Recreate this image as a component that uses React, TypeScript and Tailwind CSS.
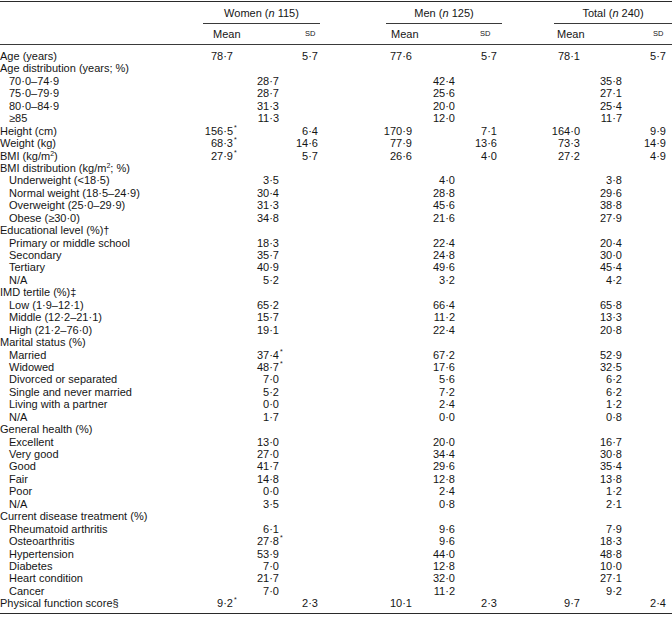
type Val = string;

type Row =
  | { kind: "head"; label: React.ReactNode }
  | { kind: "pct"; label: React.ReactNode; v: [Val, Val, Val] }
  | { kind: "ms"; label: React.ReactNode; v: [Val, Val, Val, Val, Val, Val] };

const sq = <span className="relative top-[-4px] text-[7px] leading-none">2</span>;

const ROWS: Row[] = [
  { kind: "ms", label: "Age (years)", v: ["78·7", "5·7", "77·6", "5·7", "78·1", "5·7"] },
  { kind: "head", label: "Age distribution (years; %)" },
  { kind: "pct", label: "70·0–74·9", v: ["28·7", "42·4", "35·8"] },
  { kind: "pct", label: "75·0–79·9", v: ["28·7", "25·6", "27·1"] },
  { kind: "pct", label: "80·0–84·9", v: ["31·3", "20·0", "25·4"] },
  { kind: "pct", label: "≥85", v: ["11·3", "12·0", "11·7"] },
  { kind: "ms", label: "Height (cm)", v: ["156·5*", "6·4", "170·9", "7·1", "164·0", "9·9"] },
  { kind: "ms", label: "Weight (kg)", v: ["68·3*", "14·6", "77·9", "13·6", "73·3", "14·9"] },
  { kind: "ms", label: <>BMI (kg/m{sq})</>, v: ["27·9*", "5·7", "26·6", "4·0", "27·2", "4·9"] },
  { kind: "head", label: <>BMI distribution (kg/m{sq}; %)</> },
  { kind: "pct", label: "Underweight (<18·5)", v: ["3·5", "4·0", "3·8"] },
  { kind: "pct", label: "Normal weight (18·5–24·9)", v: ["30·4", "28·8", "29·6"] },
  { kind: "pct", label: "Overweight (25·0–29·9)", v: ["31·3", "45·6", "38·8"] },
  { kind: "pct", label: "Obese (≥30·0)", v: ["34·8", "21·6", "27·9"] },
  { kind: "head", label: "Educational level (%)†" },
  { kind: "pct", label: "Primary or middle school", v: ["18·3", "22·4", "20·4"] },
  { kind: "pct", label: "Secondary", v: ["35·7", "24·8", "30·0"] },
  { kind: "pct", label: "Tertiary", v: ["40·9", "49·6", "45·4"] },
  { kind: "pct", label: "N/A", v: ["5·2", "3·2", "4·2"] },
  { kind: "head", label: "IMD tertile (%)‡" },
  { kind: "pct", label: "Low (1·9–12·1)", v: ["65·2", "66·4", "65·8"] },
  { kind: "pct", label: "Middle (12·2–21·1)", v: ["15·7", "11·2", "13·3"] },
  { kind: "pct", label: "High (21·2–76·0)", v: ["19·1", "22·4", "20·8"] },
  { kind: "head", label: "Marital status (%)" },
  { kind: "pct", label: "Married", v: ["37·4*", "67·2", "52·9"] },
  { kind: "pct", label: "Widowed", v: ["48·7*", "17·6", "32·5"] },
  { kind: "pct", label: "Divorced or separated", v: ["7·0", "5·6", "6·2"] },
  { kind: "pct", label: "Single and never married", v: ["5·2", "7·2", "6·2"] },
  { kind: "pct", label: "Living with a partner", v: ["0·0", "2·4", "1·2"] },
  { kind: "pct", label: "N/A", v: ["1·7", "0·0", "0·8"] },
  { kind: "head", label: "General health (%)" },
  { kind: "pct", label: "Excellent", v: ["13·0", "20·0", "16·7"] },
  { kind: "pct", label: "Very good", v: ["27·0", "34·4", "30·8"] },
  { kind: "pct", label: "Good", v: ["41·7", "29·6", "35·4"] },
  { kind: "pct", label: "Fair", v: ["14·8", "12·8", "13·8"] },
  { kind: "pct", label: "Poor", v: ["0·0", "2·4", "1·2"] },
  { kind: "pct", label: "N/A", v: ["3·5", "0·8", "2·1"] },
  { kind: "head", label: "Current disease treatment (%)" },
  { kind: "pct", label: "Rheumatoid arthritis", v: ["6·1", "9·6", "7·9"] },
  { kind: "pct", label: "Osteoarthritis", v: ["27·8*", "9·6", "18·3"] },
  { kind: "pct", label: "Hypertension", v: ["53·9", "44·0", "48·8"] },
  { kind: "pct", label: "Diabetes", v: ["7·0", "12·8", "10·0"] },
  { kind: "pct", label: "Heart condition", v: ["21·7", "32·0", "27·1"] },
  { kind: "pct", label: "Cancer", v: ["7·0", "11·2", "9·2"] },
  { kind: "ms", label: "Physical function score§", v: ["9·2*", "2·3", "10·1", "2·3", "9·7", "2·4"] },
];

// a value with an optional significance star hanging past the right edge
function Num({ value }: { value: string }) {
  const star = value.endsWith("*");
  const text = star ? value.slice(0, -1) : value;
  return (
    <span className="relative">
      {text}
      {star && <span className="absolute left-full top-[-3px] pl-[1px] text-[7px]">*</span>}
    </span>
  );
}

const cols =
  "grid grid-cols-[200px_33px_46px_39px_94px_43px_42px_83px_42px_44px] items-center h-[12.45px] leading-[12.45px]";

function Group({ title, n, className }: { title: string; n: string; className: string }) {
  return (
    <div className={className}>
      <div className="flex h-[21px] items-center justify-center border-b border-[#3a3a3a]">
        {title} (<i>n</i>&nbsp;{n})
      </div>
    </div>
  );
}

export default function App() {
  return (
    <div
      className="w-[672px] h-[618px] bg-white text-[11px] text-[#151515]"
      style={{ fontFamily: '"Liberation Sans", Arial, sans-serif' }}
    >
      <div className="pt-[1px]">
        <div className="border-t-[1.5px] border-[#2a2a2a]" />
        {/* group headers */}
        <div className="flex pt-[1px]">
          <div className="w-[203px]" />
          <Group title="Women" n="115" className="w-[117px]" />
          <div className="w-[66px]" />
          <Group title="Men" n="125" className="w-[116px]" />
          <div className="w-[52px]" />
          <Group title="Total" n="240" className="w-[118px]" />
        </div>
        {/* mean / sd */}
        <div className="flex h-[21px] items-center border-b border-[#3a3a3a]">
          <div className="w-[213px]" />
          <div className="w-[92px]">Mean</div>
          <div className="w-[86px] text-[7.5px]">SD</div>
          <div className="w-[89px]">Mean</div>
          <div className="w-[77px] text-[7.5px]">SD</div>
          <div className="w-[96px]">Mean</div>
          <div className="text-[7.5px]">SD</div>
        </div>
        {/* body */}
        <div className="pt-[5px] pb-[3px]">
          {ROWS.map((r, i) => {
            const indent = r.kind === "pct";
            return (
              <div key={i} className={cols}>
                <div className={indent ? "pl-[9px] whitespace-nowrap" : "whitespace-nowrap"}>{r.label}</div>
                {r.kind === "ms" && (
                  <>
                    <div className="text-right"><Num value={r.v[0]} /></div>
                    <div />
                    <div className="text-right">{r.v[1]}</div>
                    <div className="text-right"><Num value={r.v[2]} /></div>
                    <div />
                    <div className="text-right">{r.v[3]}</div>
                    <div className="text-right"><Num value={r.v[4]} /></div>
                    <div />
                    <div className="text-right">{r.v[5]}</div>
                  </>
                )}
                {r.kind === "pct" && (
                  <>
                    <div />
                    <div className="text-right"><Num value={r.v[0]} /></div>
                    <div />
                    <div />
                    <div className="text-right"><Num value={r.v[1]} /></div>
                    <div />
                    <div />
                    <div className="text-right"><Num value={r.v[2]} /></div>
                    <div />
                  </>
                )}
              </div>
            );
          })}
        </div>
        <div className="border-t-[1.5px] border-[#2a2a2a]" />
      </div>
    </div>
  );
}
